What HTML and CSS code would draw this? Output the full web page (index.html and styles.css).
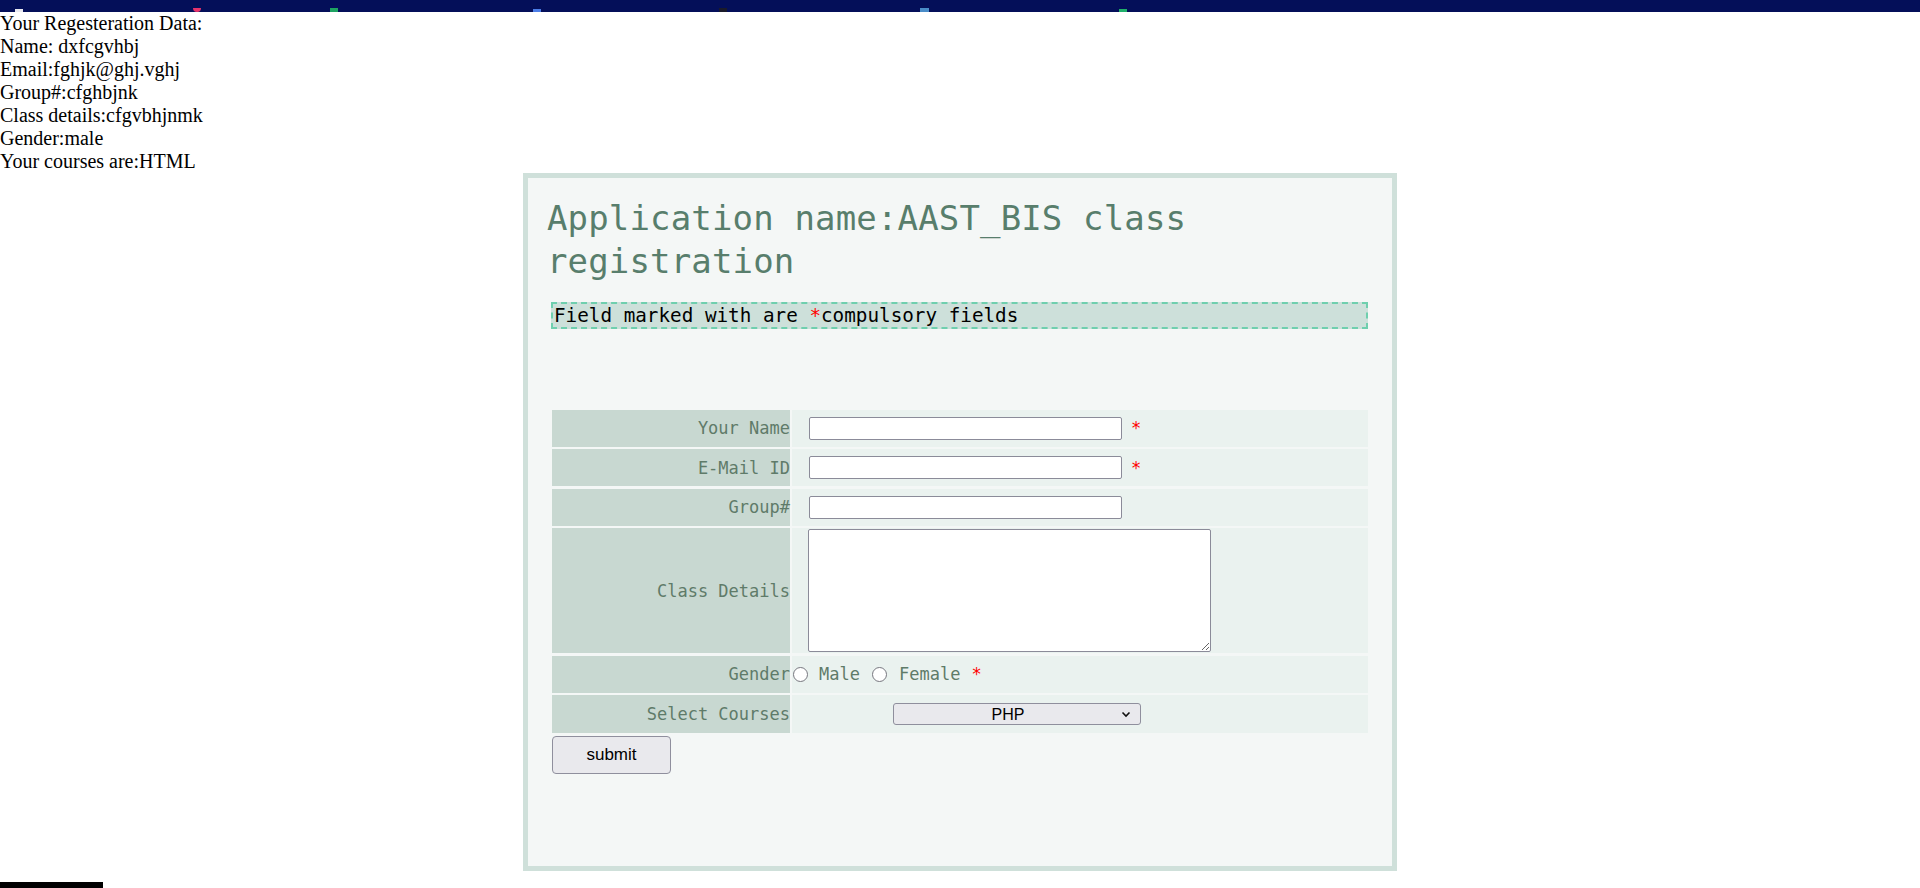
FILE: index.html
```
<!DOCTYPE html>
<html lang="en">
<head>
<meta charset="utf-8">
<title>AAST_BIS class registration</title>
<link rel="stylesheet" href="styles.css">
</head>
<body>
<div class="topbar">
  <span class="fav fav-white"></span>
  <span class="fav fav-pink"></span>
  <span class="fav fav-green"></span>
  <span class="fav fav-blue"></span>
  <span class="fav fav-dark"></span>
  <span class="fav fav-sky"></span>
  <span class="fav fav-green2"></span>
</div>
<div class="data">
  <div>Your Regesteration Data:</div>
  <div>Name: dxfcgvhbj</div>
  <div>Email:fghjk@ghj.vghj</div>
  <div>Group#:cfghbjnk</div>
  <div>Class details:cfgvbhjnmk</div>
  <div>Gender:male</div>
  <div>Your courses are:HTML</div>
</div>
<div class="panel">
  <h1 class="title">Application name:AAST_BIS class registration</h1>
  <div class="notice">Field marked with are <span class="req">*</span>compulsory fields</div>
  <form class="form">
    <div class="grid">
      <label class="lbl">Your Name</label>
      <div class="cell"><input class="txt" type="text"><span class="req star">*</span></div>
      <label class="lbl">E-Mail ID</label>
      <div class="cell"><input class="txt" type="text"><span class="req star">*</span></div>
      <label class="lbl">Group#</label>
      <div class="cell"><input class="txt" type="text"></div>
      <label class="lbl">Class Details</label>
      <div class="cell"><textarea class="area"></textarea></div>
      <label class="lbl">Gender</label>
      <div class="cell gender">
        <input class="radio" type="radio" name="g"><span class="opt">Male</span>
        <input class="radio radio2" type="radio" name="g"><span class="opt">Female</span>
        <span class="req star2">*</span>
      </div>
      <label class="lbl">Select Courses</label>
      <div class="cell">
        <span class="selwrap">
          <select class="sel"><option>PHP</option><option>HTML</option></select>
          <svg class="chev" width="10" height="7" viewBox="0 0 10 7"><path d="M1.5 1.5 L5 5 L8.5 1.5" fill="none" stroke="#111" stroke-width="1.6"/></svg>
        </span>
      </div>
    </div>
    <button class="btn" type="button">submit</button>
  </form>
</div>
<div class="blackbar"></div>
</body>
</html>
```
FILE: styles.css
```
html { overflow: hidden; }
body {
  margin: 0;
  background: #ffffff;
  font-family: "Liberation Serif", "Times New Roman", serif;
}
.topbar {
  height: 12px;
  background: #040f59;
  display: flex;
  align-items: flex-end;
}
.fav { display: inline-block; height: 4px; width: 8px; }
.fav-white { background: #e8e8f0; margin-left: 15px; height: 3px; }
.fav-pink { background: #e8336b; margin-left: 170px; border-radius: 0 0 4px 4px; }
.fav-green { background: #1ea362; margin-left: 129px; }
.fav-blue { background: #4c7ee8; margin-left: 195px; height: 3px; }
.fav-dark { background: #1a1a2a; margin-left: 178px; }
.fav-sky { background: #4a8cc8; margin-left: 193px; width: 9px; }
.fav-green2 { background: #20b06a; margin-left: 190px; height: 3px; }

.data {
  font-size: 20px;
  line-height: 23px;
  color: #000;
}

.panel {
  box-sizing: border-box;
  width: 874px;
  height: 698px;
  margin: 0 auto;
  border: 5px solid #cfe0da;
  background: #f4f7f6;
  padding: 0 24px 0 19px;
}
.title {
  margin: 19px 0 0 0;
  font-family: "DejaVu Sans Mono", monospace;
  font-weight: normal;
  font-size: 34px;
  line-height: 43px;
  color: #587e6c;
  letter-spacing: 0.15px;
}
.notice {
  margin: 19px 0 0 4px;
  border: 2px dashed #6fcfae;
  background: #cde0da;
  font-family: "DejaVu Sans Mono", monospace;
  font-size: 19.3px;
  line-height: 23px;
  color: #000;
  padding-left: 1px;
}
.req { color: #ff0000; }
.form { margin: 80.5px 0 0 5px; }
.grid {
  display: grid;
  grid-template-columns: 238px 576px;
  grid-template-rows: 37px 37px 37px 125px 37px 38px;
  column-gap: 2px;
  row-gap: 2.5px;
}
.lbl {
  background: #c8d8d1;
  color: #5f7b69;
  font-family: "DejaVu Sans Mono", monospace;
  font-size: 17px;
  display: flex;
  align-items: center;
  justify-content: flex-end;
}
.cell {
  background: #eaf2ef;
  display: flex;
  align-items: center;
  padding-left: 17px;
  font-family: "DejaVu Sans Mono", monospace;
  font-size: 17px;
}
.txt {
  box-sizing: border-box;
  width: 313px;
  height: 23px;
  margin: 0;
  border: 1px solid #8b8b99;
  border-radius: 2px;
  background: #fff;
}
.star { margin-left: 9px; }
.area {
  box-sizing: border-box;
  width: 403px;
  height: 123px;
  margin: 0 0 0 -1px;
  border: 1px solid #8b8b99;
  border-radius: 2px;
  background: #fff;
}
.gender { padding-left: 0; }
.radio {
  appearance: none;
  -webkit-appearance: none;
  box-sizing: border-box;
  width: 15px;
  height: 15px;
  margin: 0 11px 0 1px;
  border: 1.5px solid #77777f;
  border-radius: 50%;
  background: #fff;
}
.radio2 { margin-left: 12px; margin-right: 12px; }
.opt { color: #5f7b69; }
.star2 { margin-left: 11px; }
.selwrap {
  position: relative;
  display: inline-block;
  margin-left: 84px;
}
.sel {
  appearance: none;
  -webkit-appearance: none;
  box-sizing: border-box;
  width: 248px;
  height: 22px;
  margin: 0;
  padding: 0 18px 0 0;
  border: 1px solid #8f8f9d;
  border-radius: 3px;
  background: #e9e9ed;
  font-family: "Liberation Sans", Arial, sans-serif;
  font-size: 16px;
  color: #000;
  text-align: center;
  text-align-last: center;
  display: block;
}
.chev {
  position: absolute;
  right: 10px;
  top: 8px;
  pointer-events: none;
}
.btn {
  display: block;
  box-sizing: border-box;
  width: 119px;
  height: 38px;
  margin-top: 3px;
  border: 1px solid #8f8f9d;
  border-radius: 4px;
  background: #e9e9ed;
  font-family: "Liberation Sans", Arial, sans-serif;
  font-size: 17px;
  color: #000;
  padding: 0;
}
.blackbar {
  width: 103px;
  height: 6px;
  margin-top: 11px;
  background: #000;
}
```
